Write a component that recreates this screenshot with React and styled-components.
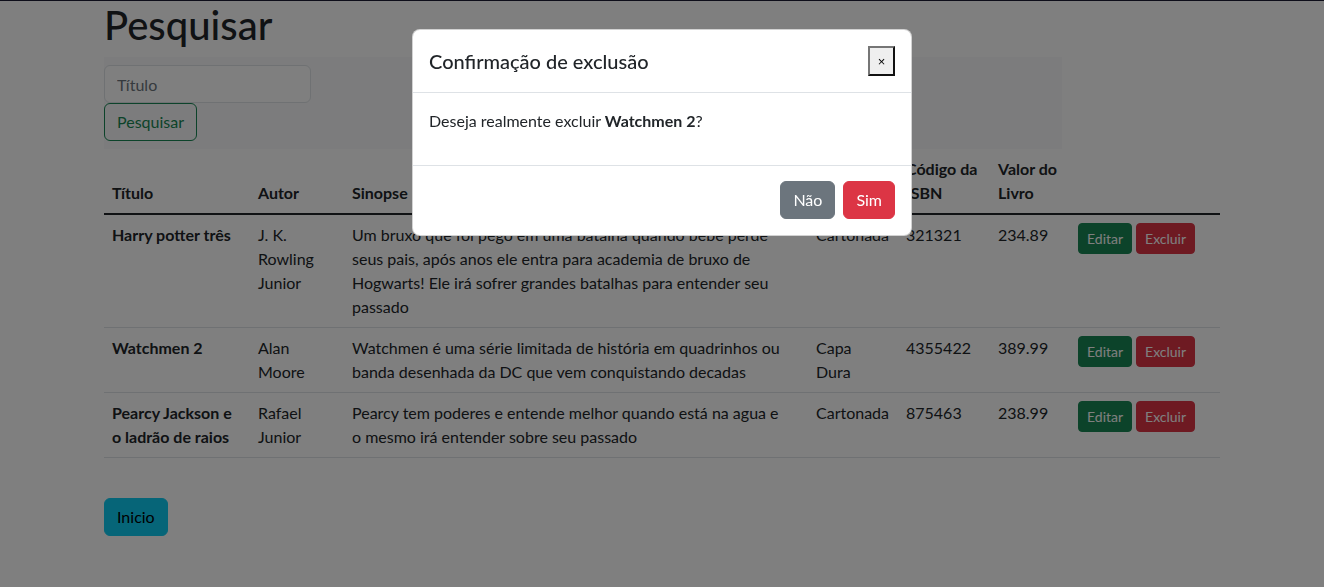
import React from 'react'
import styled, { createGlobalStyle } from 'styled-components'

const GlobalStyle = createGlobalStyle`
  * { box-sizing: border-box; }
  html, body {
    margin: 0;
    padding: 0;
    background: #fff;
  }
  body {
    font-family: Lato, "Liberation Sans", sans-serif;
    font-size: 16px;
    line-height: 1.5;
    color: #212529;
    border-top: 1px solid #1c1c34;
    min-height: 587px;
  }
`

const Container = styled.div`
  max-width: 1140px;
  margin: 0 auto;
  padding: 0 12px;
`

const Heading = styled.h1`
  margin: 0 0 8px;
  font-size: 40px;
  font-weight: 500;
  line-height: 1.2;
`

const SearchForm = styled.form`
  width: 958px;
  background: #f8f9fa;
  padding: 8px 0;
  display: flex;
  flex-direction: column;
  align-items: flex-start;
`

const TextInput = styled.input`
  width: 207px;
  height: 38px;
  padding: 6px 12px;
  font: inherit;
  color: #212529;
  border: 1px solid #dee2e6;
  border-radius: 6px;
  background: #fff;
  &::placeholder { color: #6c757d; }
`

const variants = {
  success: { bg: '#198754', fg: '#fff' },
  danger: { bg: '#dc3545', fg: '#fff' },
  secondary: { bg: '#6c757d', fg: '#fff' },
  info: { bg: '#0dcaf0', fg: '#000' },
  outline: { bg: 'transparent', fg: '#198754', border: '#198754' },
}

const Button = styled.button`
  font-family: inherit;
  font-size: ${p => (p.$small ? '14px' : '16px')};
  font-weight: 400;
  line-height: 1.5;
  padding: ${p => (p.$small ? '4px 8px' : '6px 12px')};
  border-radius: ${p => (p.$small ? '4px' : '6px')};
  border: 1px solid ${p => variants[p.$variant].border || variants[p.$variant].bg};
  background: ${p => variants[p.$variant].bg};
  color: ${p => variants[p.$variant].fg};
  cursor: pointer;
`

const Table = styled.table`
  width: 100%;
  border-collapse: collapse;
  margin-bottom: 16px;
  th, td {
    padding: 8px;
    text-align: left;
    vertical-align: top;
    border-bottom: 1px solid #dee2e6;
  }
  thead th {
    vertical-align: bottom;
    border-bottom: 2px solid #212529;
    font-weight: 700;
  }
  tbody td:first-child { font-weight: 700; }
  tbody td:nth-child(3) { padding-right: 22px; }
`

const Actions = styled.div`
  display: flex;
  gap: 4px;
`

const Footer = styled.div`
  padding-top: 24px;
`

const Backdrop = styled.div`
  position: fixed;
  inset: 0;
  background: rgba(0, 0, 0, 0.5);
`

const ModalWrap = styled.div`
  position: fixed;
  inset: 0;
  display: flex;
  justify-content: center;
  align-items: flex-start;
  padding-top: 29px;
`

const Modal = styled.div`
  width: 500px;
  background: #fff;
  border: 1px solid rgba(0, 0, 0, 0.175);
  border-radius: 8px;
  overflow: hidden;
`

const ModalHeader = styled.div`
  display: flex;
  align-items: center;
  justify-content: space-between;
  padding: 16px;
  border-bottom: 1px solid #dee2e6;
`

const ModalTitle = styled.h5`
  margin: 0;
  font-size: 20px;
  font-weight: 500;
  line-height: 1.5;
`

const CloseButton = styled.button`
  width: 27px;
  height: 30px;
  padding: 0;
  font-family: "Liberation Sans", sans-serif;
  font-size: 13px;
  color: #000;
  background: #efefef;
  border: 2px solid;
  border-color: #767676 #111 #111 #767676;
`

const ModalBody = styled.div`
  padding: 16px;
  p { margin: 0 0 16px; }
`

const ModalFooter = styled.div`
  display: flex;
  justify-content: flex-end;
  gap: 8px;
  padding: 15px 16px 16px;
  border-top: 1px solid #dee2e6;
`

const books = [
  {
    titulo: 'Harry potter três',
    autor: 'J. K. Rowling Junior',
    sinopse: 'Um bruxo que foi pego em uma batalha quando bebe perde seus pais, após anos ele entra para academia de bruxo de Hogwarts! Ele irá sofrer grandes batalhas para entender seu passado',
    capa: 'Cartonada',
    isbn: '321321',
    valor: '234.89',
  },
  {
    titulo: 'Watchmen 2',
    autor: 'Alan Moore',
    sinopse: 'Watchmen é uma série limitada de história em quadrinhos ou banda desenhada da DC que vem conquistando decadas',
    capa: 'Capa Dura',
    isbn: '4355422',
    valor: '389.99',
  },
  {
    titulo: 'Pearcy Jackson e o ladrão de raios',
    autor: 'Rafael Junior',
    sinopse: 'Pearcy tem poderes e entende melhor quando está na agua e o mesmo irá entender sobre seu passado',
    capa: 'Cartonada',
    isbn: '875463',
    valor: '238.99',
  },
]

export default function App() {
  return (
    <>
      <GlobalStyle />
      <Container>
        <Heading>Pesquisar</Heading>
        <SearchForm onSubmit={e => e.preventDefault()}>
          <TextInput placeholder="Título" />
          <Button $variant="outline" type="submit">Pesquisar</Button>
        </SearchForm>
        <Table>
          <colgroup>
            <col style={{ width: 146 }} />
            <col style={{ width: 94 }} />
            <col style={{ width: 464 }} />
            <col style={{ width: 90 }} />
            <col style={{ width: 92 }} />
            <col style={{ width: 80 }} />
            <col />
          </colgroup>
          <thead>
            <tr>
              <th>Título</th>
              <th>Autor</th>
              <th>Sinopse</th>
              <th>Capa</th>
              <th>Código da ISBN</th>
              <th>Valor do Livro</th>
              <th />
            </tr>
          </thead>
          <tbody>
            {books.map(b => (
              <tr key={b.isbn}>
                <td>{b.titulo}</td>
                <td>{b.autor}</td>
                <td>{b.sinopse}</td>
                <td>{b.capa}</td>
                <td>{b.isbn}</td>
                <td>{b.valor}</td>
                <td>
                  <Actions>
                    <Button $small $variant="success">Editar</Button>
                    <Button $small $variant="danger">Excluir</Button>
                  </Actions>
                </td>
              </tr>
            ))}
          </tbody>
        </Table>
        <Footer>
          <Button $variant="info">Inicio</Button>
        </Footer>
      </Container>
      <Backdrop />
      <ModalWrap>
        <Modal>
          <ModalHeader>
            <ModalTitle>Confirmação de exclusão</ModalTitle>
            <CloseButton>×</CloseButton>
          </ModalHeader>
          <ModalBody>
            <p>Deseja realmente excluir <strong>Watchmen 2</strong>?</p>
          </ModalBody>
          <ModalFooter>
            <Button $variant="secondary">Não</Button>
            <Button $variant="danger">Sim</Button>
          </ModalFooter>
        </Modal>
      </ModalWrap>
    </>
  )
}
